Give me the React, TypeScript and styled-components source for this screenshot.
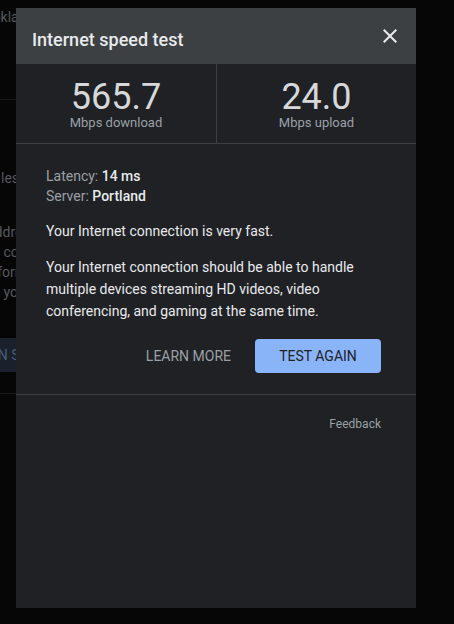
import React from "react";
import styled, { createGlobalStyle } from "styled-components";

const COLORS = {
  Page: "#060606",
  Header: "#3c4043",
  Body: "#202124",
  Line: "#3c4043",
  Text: "#e8eaed",
  Muted: "#9aa0a6",
  Blue: "#8ab4f8",
  Faded: "#55585c",
};

const GlobalStyle = createGlobalStyle`
  html, body {
    margin: 0;
    padding: 0;
    background: ${COLORS.Page};
    font-family: Roboto, "Noto Sans", "Liberation Sans", sans-serif;
  }
`;

const paragraphRows = [
  { text: "address", indent: -13 },
  { text: " connection", indent: 0 },
  { text: "information", indent: -14 },
  { text: " your", indent: 0 },
];

function CloseIcon() {
  return (
    <svg width="24" height="24" viewBox="0 0 24 24" fill="currentColor">
      <path d="M19 6.41L17.59 5 12 10.59 6.41 5 5 6.41 10.59 12 5 17.59 6.41 19 12 13.41 17.59 19 19 17.59 13.41 12z" />
    </svg>
  );
}

export default function App() {
  return (
    <Screen>
      <GlobalStyle />
      <BackPage>
        <BackTitle>Ookla</BackTitle>
        <BackRule />
        <BackLine $indent={1} $top={68}>
          less
        </BackLine>
        <BackBlock>
          {paragraphRows.map((row) => (
            <BackLine key={row.text} $indent={row.indent} $top={0}>
              {row.text}
            </BackLine>
          ))}
        </BackBlock>
        <BackButton>RUN SPEED TEST</BackButton>
        <BackRule $top={21} />
      </BackPage>

      <Dialog>
        <Header>
          <Title>Internet speed test</Title>
          <CloseButton aria-label="Close">
            <CloseIcon />
          </CloseButton>
        </Header>

        <Stats>
          <Stat>
            <StatValue>565.7</StatValue>
            <StatLabel>Mbps download</StatLabel>
          </Stat>
          <Stat>
            <StatValue>24.0</StatValue>
            <StatLabel>Mbps upload</StatLabel>
          </Stat>
        </Stats>

        <Content>
          <InfoLine>
            <InfoLabel>Latency: </InfoLabel>
            <InfoValue>14 ms</InfoValue>
          </InfoLine>
          <InfoLine>
            <InfoLabel>Server: </InfoLabel>
            <InfoValue>Portland</InfoValue>
          </InfoLine>

          <Summary>Your Internet connection is very fast.</Summary>
          <Summary>
            Your Internet connection should be able to handle multiple devices
            streaming HD videos, video conferencing, and gaming at the same
            time.
          </Summary>

          <Actions>
            <TextButton>LEARN MORE</TextButton>
            <PrimaryButton>TEST AGAIN</PrimaryButton>
          </Actions>
        </Content>

        <Footer>
          <FeedbackLink>Feedback</FeedbackLink>
        </Footer>
      </Dialog>
    </Screen>
  );
}

const Screen = styled.div`
  position: relative;
  width: 454px;
  height: 624px;
  overflow: hidden;
  background: ${COLORS.Page};
`;

/* page behind the dialog, only a sliver shows on the left */
const BackPage = styled.div`
  display: flex;
  flex-direction: column;
  width: 200px;
  color: ${COLORS.Faded};
  font-size: 14px;
`;

const BackTitle = styled.div`
  margin: 7px 0 0 -17px;
  line-height: 20px;
  white-space: nowrap;
`;

const BackRule = styled.div<{ $top?: number }>`
  height: 1px;
  margin-top: ${(p) => p.$top ?? 72}px;
  background: #1a1a1b;
`;

const BackBlock = styled.div`
  display: flex;
  flex-direction: column;
  margin-top: 34px;
`;

const BackLine = styled.div<{ $indent: number; $top: number }>`
  margin-top: ${(p) => p.$top}px;
  margin-left: ${(p) => p.$indent}px;
  line-height: 20px;
  white-space: pre;
`;

const BackButton = styled.div`
  display: flex;
  align-items: center;
  height: 34px;
  margin: 36px 0 0 -20px;
  background: #1a212c;
  color: #4a5a74;
  font-size: 14px;
  white-space: nowrap;
`;

const Dialog = styled.div`
  position: absolute;
  left: 16px;
  top: 8px;
  width: 400px;
  height: 600px;
  display: flex;
  flex-direction: column;
  background: ${COLORS.Body};
`;

const Header = styled.div`
  display: flex;
  align-items: center;
  justify-content: space-between;
  height: 56px;
  padding: 0 14px 0 16px;
  background: ${COLORS.Header};
`;

const Title = styled.h2`
  margin: 8px 0 0;
  font-size: 18px;
  font-weight: 500;
  line-height: 24px;
  color: ${COLORS.Text};
`;

const CloseButton = styled.button`
  display: flex;
  padding: 0;
  border: none;
  background: none;
  color: ${COLORS.Text};
  cursor: pointer;
`;

const Stats = styled.div`
  display: grid;
  grid-template-columns: 1fr 1fr;
  border-bottom: 1px solid ${COLORS.Line};
`;

const Stat = styled.div`
  display: flex;
  flex-direction: column;
  align-items: center;
  padding: 15px 0 12px;

  & + & {
    border-left: 1px solid ${COLORS.Line};
  }
`;

const StatValue = styled.div`
  font-size: 36px;
  line-height: 36px;
  color: #d6d8da;
`;

const StatLabel = styled.div`
  font-size: 13px;
  line-height: 16px;
  color: ${COLORS.Muted};
`;

const Content = styled.div`
  display: flex;
  flex-direction: column;
  padding: 22px 35px 21px 30px;
  border-bottom: 1px solid ${COLORS.Line};
  font-size: 14px;
`;

const InfoLine = styled.div`
  line-height: 20px;
`;

const InfoLabel = styled.span`
  color: ${COLORS.Muted};
`;

const InfoValue = styled.span`
  color: ${COLORS.Text};
  font-weight: 500;
`;

const Summary = styled.p`
  margin: 14px 0 0;
  line-height: 22px;
  color: ${COLORS.Text};
`;

const Actions = styled.div`
  display: flex;
  justify-content: flex-end;
  margin-top: 17px;
`;

const TextButton = styled.button`
  height: 34px;
  padding: 0 24px;
  border: none;
  background: none;
  font-family: inherit;
  font-size: 14px;
  color: ${COLORS.Muted};
  cursor: pointer;
`;

const PrimaryButton = styled(TextButton)`
  width: 126px;
  padding: 0;
  border-radius: 4px;
  background: ${COLORS.Blue};
  color: ${COLORS.Body};
`;

const Footer = styled.div`
  display: flex;
  justify-content: flex-end;
  padding: 21px 35px 0;
`;

const FeedbackLink = styled.a`
  font-size: 12px;
  line-height: 16px;
  color: ${COLORS.Muted};
  cursor: pointer;
`;
